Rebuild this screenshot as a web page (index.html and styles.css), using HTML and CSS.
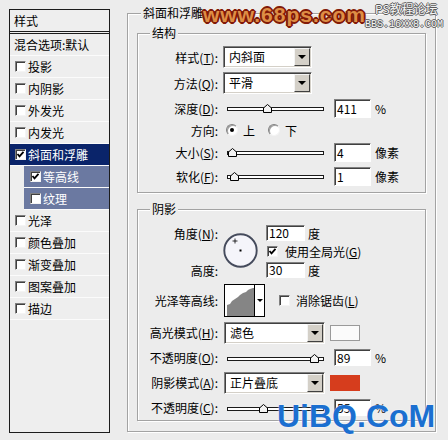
FILE: index.html
```html
<!DOCTYPE html>
<html lang="zh-CN">
<head>
    <meta charset="UTF-8">
    <meta name="viewport" content="width=device-width, initial-scale=1.0">
    <title>图层样式</title>
    <link rel="stylesheet" href="styles.css">
</head>
<body>

<div class="dialog">
    <ul class="styles">
        <li class="head">样式</li>
        <li class="item plain">混合选项:默认</li>
        <li class="item"><span class="cb"></span>投影</li>
        <li class="item"><span class="cb"></span>内阴影</li>
        <li class="item"><span class="cb"></span>外发光</li>
        <li class="item"><span class="cb"></span>内发光</li>
        <li class="item selected"><span class="cb"><svg viewBox="0 0 9 9"><path d="M1.5 4 L3.5 6.3 L7.5 1.8" /></svg></span>斜面和浮雕</li>
        <li class="item sub"><span class="cb"><svg viewBox="0 0 9 9"><path d="M1.5 4 L3.5 6.3 L7.5 1.8" /></svg></span>等高线</li>
        <li class="item sub"><span class="cb"></span>纹理</li>
        <li class="item"><span class="cb"></span>光泽</li>
        <li class="item"><span class="cb"></span>颜色叠加</li>
        <li class="item"><span class="cb"></span>渐变叠加</li>
        <li class="item"><span class="cb"></span>图案叠加</li>
        <li class="item"><span class="cb"></span>描边</li>
    </ul>

    <fieldset class="group outer">
        <legend>斜面和浮雕</legend>

        <fieldset class="group inner struct">
            <legend>结构</legend>
            <div class="row row-tall">
                <label class="lbl">样式(<u>T</u>):</label>
                <div class="select sel-short"><span class="select-text">内斜面</span><span class="select-btn"></span></div>
            </div>
            <div class="row row-tall">
                <label class="lbl">方法(<u>Q</u>):</label>
                <div class="select sel-short"><span class="select-text">平滑</span><span class="select-btn"></span></div>
            </div>
            <div class="row">
                <label class="lbl">深度(<u>D</u>):</label>
                <div class="slider"><svg class="thumb" style="left: 35px" viewBox="0 0 9 9"><polygon points="0.5,8.5 0.5,4 4.5,0.5 8.5,4 8.5,8.5" /></svg></div>
                <span class="field tall">411</span>
                <span class="unit">%</span>
            </div>
            <div class="row row-short">
                <label class="lbl">方向:</label>
                <span class="radio on"></span><span class="radio-text">上</span>
                <span class="radio second"></span><span class="radio-text">下</span>
            </div>
            <div class="row">
                <label class="lbl">大小(<u>S</u>):</label>
                <div class="slider"><svg class="thumb" style="left: 0px" viewBox="0 0 9 9"><polygon points="0.5,8.5 0.5,4 4.5,0.5 8.5,4 8.5,8.5" /></svg></div>
                <span class="field tall">4</span>
                <span class="unit">像素</span>
            </div>
            <div class="row">
                <label class="lbl">软化(<u>F</u>):</label>
                <div class="slider"><svg class="thumb" style="left: 2px" viewBox="0 0 9 9"><polygon points="0.5,8.5 0.5,4 4.5,0.5 8.5,4 8.5,8.5" /></svg></div>
                <span class="field tall">1</span>
                <span class="unit">像素</span>
            </div>
        </fieldset>

        <fieldset class="group inner shade">
            <legend>阴影</legend>
            <div class="angle">
                <label class="lbl a-lbl">角度(<u>N</u>):</label>
                <svg class="dial" viewBox="0 0 35 35">
                    <circle cx="17.5" cy="17.5" r="16.2" fill="#f5f5fa" stroke="#454b5c" stroke-width="1.9" />
                    <path d="M12 5.5 V10.5 M9.5 8 H14.5" stroke="#000" stroke-width="0.8" />
                    <rect x="16.5" y="16.5" width="2" height="2" fill="#000" />
                </svg>
                <div class="a-ctl"><span class="field wide">120</span><span class="unit deg">度</span></div>
                <div class="g-ctl"><span class="cb"><svg viewBox="0 0 9 9"><path d="M1.5 4 L3.5 6.3 L7.5 1.8" /></svg></span><span class="cb-text">使用全局光(<u>G</u>)</span></div>
                <label class="lbl h-lbl">高度:</label>
                <div class="h-ctl"><span class="field wide">30</span><span class="unit deg">度</span></div>
            </div>

            <div class="row row-contour">
                <label class="lbl">光泽等高线:</label>
                <div class="contour">
                    <svg viewBox="0 0 29 31"><polygon points="2,31 2,20 5,19 7,16 10,14 13,12 15,10 18,8 21,7 23,5 25,4 28,3 29,3 29,31" fill="#858585" /></svg>
                    <span class="contour-btn"></span>
                </div>
                <span class="cb aa"></span><span class="cb-text">消除锯齿(<u>L</u>)</span>
            </div>

            <div class="row row-mode">
                <label class="lbl">高光模式(<u>H</u>):</label>
                <div class="select sel-long"><span class="select-text">滤色</span><span class="select-btn"></span></div>
                <span class="swatch light"></span>
            </div>
            <div class="row row-mode">
                <label class="lbl">不透明度(<u>O</u>):</label>
                <div class="slider"><svg class="thumb" style="left: 82px" viewBox="0 0 9 9"><polygon points="0.5,8.5 0.5,4 4.5,0.5 8.5,4 8.5,8.5" /></svg></div>
                <span class="field">89</span>
                <span class="unit">%</span>
            </div>
            <div class="row row-mode">
                <label class="lbl">阴影模式(<u>A</u>):</label>
                <div class="select sel-long"><span class="select-text">正片叠底</span><span class="select-btn"></span></div>
                <span class="swatch red"></span>
            </div>
            <div class="row row-mode">
                <label class="lbl">不透明度(<u>C</u>):</label>
                <div class="slider"><svg class="thumb" style="left: 31px" viewBox="0 0 9 9"><polygon points="0.5,8.5 0.5,4 4.5,0.5 8.5,4 8.5,8.5" /></svg></div>
                <span class="field">55</span>
                <span class="unit">%</span>
            </div>
        </fieldset>
    </fieldset>

    <!-- 水印 -->
    <div class="wm wm-68">www.68ps.com</div>
    <div class="wm wm-ps">PS教程论坛</div>
    <div class="wm wm-bbs">BBS.16XX8.COM</div>
    <div class="wm wm-uibq">UiBQ.CoM</div>
</div>

</body>
</html>
```

FILE: styles.css
```css
* {
    box-sizing: border-box;
}

body {
    margin: 0;
    background-color: #ececec;
    font-family: "Noto Sans CJK SC", "Liberation Sans", sans-serif;
    font-size: 12px;
    color: #000;
}

.dialog {
    position: relative;
    display: flex;
    align-items: flex-start;
    width: 448px;
    height: 440px;
    padding: 6px 0 0 9px;
    overflow: hidden;
}

/* 左侧样式列表 */
.styles {
    list-style: none;
    margin: 3px 0 0;
    padding: 0;
    width: 101px;
    height: 424px;
    border: 1px solid #1c1c1c;
    background-color: #eeeeee;
}

.styles .head {
    height: 24px;
    line-height: 21px;
    padding-left: 4px;
    border-bottom: 3px double #1c1c1c;
}

.styles .item {
    display: flex;
    align-items: center;
    height: 22px;
    padding-left: 5px;
    border-bottom: 1px solid #fbfbfb;
}

.styles .plain {
    padding-left: 4px;
}

.styles .selected {
    background-color: #0a246a;
    color: #fff;
}

.styles .sub {
    margin-left: 14px;
    padding-left: 6px;
    background-color: #6b79a1;
    color: #fff;
}

.cb {
    flex: none;
    display: flex;
    width: 11px;
    height: 11px;
    margin-right: 2px;
    background-color: #fff;
    border: 1px solid;
    border-color: #808080 #f4f4f4 #f4f4f4 #808080;
    box-shadow: inset 1px 1px 0 #404040;
}

.cb svg {
    width: 9px;
    height: 9px;
}

.cb path {
    fill: none;
    stroke: #000;
    stroke-width: 1.8;
}

/* 分组框 */
.group {
    margin: 0;
    padding: 0;
    min-inline-size: 0;
    border: 1px solid #a3a3a3;
    box-shadow: inset 1px 1px 0 #fff, 1px 1px 0 #fff;
}

.group legend {
    padding: 0 2px;
    line-height: 14px;
    background-color: #ececec;
}

.outer {
    width: 309px;
    margin-left: 17px;
    padding-bottom: 10px;
}

.outer > legend {
    margin-left: 13px;
}

.inner {
    width: 289px;
    margin-left: 9px;
}

.inner > legend {
    margin-left: 12px;
}

.struct {
    margin-top: 6px;
    padding: 4px 0;
}

.shade {
    margin-top: 9px;
    padding-top: 8px;
}

.row {
    display: flex;
    align-items: center;
    height: 24px;
}

.row-tall {
    height: 26px;
}

.row-short {
    height: 20px;
}

.row-mode {
    height: 25px;
}

.lbl {
    flex: none;
    width: 80px;
    text-align: right;
    white-space: nowrap;
}

/* 下拉框 */
.select {
    display: flex;
    height: 22px;
    margin-left: 5px;
    background-color: #fff;
    border: 1px solid;
    border-color: #808080 #fff #fff #808080;
    box-shadow: inset 1px 1px 0 #404040, inset -1px -1px 0 #d4d0c8;
}

.sel-short {
    width: 89px;
}

.sel-long {
    width: 101px;
    margin-left: 6px;
}

.select-text {
    flex: 1;
    padding-left: 5px;
    line-height: 20px;
}

.select-btn {
    display: flex;
    align-items: center;
    justify-content: center;
    width: 16px;
    margin: 1px 1px 1px 0;
    background-color: #d4d0c8;
    border: 1px solid;
    border-color: #f4f4f4 #404040 #404040 #f4f4f4;
}

.select-btn::after {
    content: "";
    border-left: 4px solid transparent;
    border-right: 4px solid transparent;
    border-top: 4px solid #000;
}

/* 滑块 */
.slider {
    position: relative;
    flex: none;
    width: 97px;
    height: 4px;
    margin: 2px 0 0 9px;
    background-color: #fff;
    border: 1px solid #1a1a1a;
}

.thumb {
    position: absolute;
    bottom: -3px;
    width: 9px;
    height: 9px;
}

.thumb polygon {
    fill: #f2f2f2;
    stroke: #000;
    stroke-width: 1;
}

.field {
    flex: none;
    width: 37px;
    height: 17px;
    margin-left: 10px;
    padding-left: 2px;
    line-height: 15px;
    background-color: #fff;
    border: 1px solid;
    border-color: #808080 #fff #fff #808080;
    box-shadow: inset 1px 1px 0 #404040;
}

.field.tall {
    height: 19px;
    line-height: 17px;
}

.field.wide {
    width: 39px;
    height: 16px;
    margin-left: 0;
    line-height: 14px;
}

.unit {
    margin-left: 4px;
}

.unit.deg {
    margin-left: 3px;
}

/* 单选 */
.radio {
    flex: none;
    display: flex;
    align-items: center;
    justify-content: center;
    width: 12px;
    height: 12px;
    margin-left: 8px;
    border-radius: 50%;
    background-color: #fff;
    border: 1px solid;
    border-color: #808080 #f4f4f4 #f4f4f4 #808080;
    box-shadow: inset 1px 1px 0 #a0a0a0;
}

.radio.second {
    margin-left: 13px;
}

.radio.on::after {
    content: "";
    width: 4px;
    height: 4px;
    border-radius: 50%;
    background-color: #000;
}

.radio-text {
    margin-left: 5px;
}

/* 角度 */
.angle {
    display: grid;
    grid-template-columns: 80px 48px auto;
    grid-template-rows: 18px 19px 18px;
}

.angle > * {
    align-self: center;
}

.a-lbl {
    grid-area: 1 / 1;
}

.h-lbl {
    grid-area: 3 / 1;
}

.dial {
    grid-area: 1 / 2 / 4 / 3;
    align-self: start;
    width: 35px;
    height: 35px;
    margin: 9px 0 0 5px;
}

.a-ctl, .g-ctl, .h-ctl {
    display: flex;
    align-items: center;
}

.a-ctl {
    grid-area: 1 / 3;
}

.g-ctl {
    grid-area: 2 / 3;
}

.h-ctl {
    grid-area: 3 / 3;
}

.g-ctl .cb {
    margin-left: 1px;
}

.cb-text {
    margin-left: 5px;
}

/* 等高线 */
.row-contour {
    height: 33px;
    margin-top: 5px;
    margin-bottom: 3px;
}

.contour {
    display: flex;
    width: 41px;
    height: 33px;
    margin-left: 6px;
    background-color: #fff;
    border: 1px solid #000;
}

.contour svg {
    width: 29px;
    height: 31px;
}

.contour-btn {
    display: flex;
    align-items: center;
    justify-content: center;
    flex: 1;
    border-left: 1px solid #000;
}

.contour-btn::after {
    content: "";
    border-left: 3px solid transparent;
    border-right: 3px solid transparent;
    border-top: 3px solid #000;
}

.cb.aa {
    margin-left: 14px;
    margin-right: 1px;
}

.swatch {
    width: 30px;
    height: 16px;
    margin-left: 5px;
}

.swatch.light {
    background-color: #fbfbfb;
    border: 1px solid #9a9a9a;
}

.swatch.red {
    background-color: #d63d1d;
}

/* 水印 */
.wm {
    position: absolute;
    white-space: nowrap;
}

.wm-68 {
    left: 203px;
    top: 4px;
    font-family: "Liberation Sans", sans-serif;
    font-size: 21px;
    font-weight: bold;
    line-height: 21px;
    letter-spacing: 1px;
    color: #de8e45;
    text-shadow: 1px 0 #821a08, -1px 0 #821a08, 0 1px #821a08, 0 -1px #821a08,
        1px 1px #821a08, -1px -1px #821a08, 1px -1px #821a08, -1px 1px #821a08,
        2px 0 #821a08, -2px 0 #821a08, 0 2px #821a08, 0 -2px #821a08,
        0 0 4px #f4e0c0;
}

.wm-ps, .wm-bbs {
    color: #f6f6f6;
    text-shadow: 1px 0 #5a5a5a, -1px 0 #5a5a5a, 0 1px #5a5a5a, 0 -1px #5a5a5a;
}

.wm-ps {
    left: 375px;
    top: 2px;
    font-size: 12px;
    line-height: 14px;
}

.wm-bbs {
    left: 365px;
    top: 19px;
    font-family: "Liberation Mono", monospace;
    font-size: 10px;
    line-height: 12px;
}

.wm-uibq {
    left: 277px;
    top: 400px;
    font-family: "Liberation Sans", sans-serif;
    font-size: 32px;
    font-weight: bold;
    line-height: 32px;
    color: #1b6fd0;
    text-shadow: 0 0 2px rgba(255, 255, 255, 0.8);
}
```
